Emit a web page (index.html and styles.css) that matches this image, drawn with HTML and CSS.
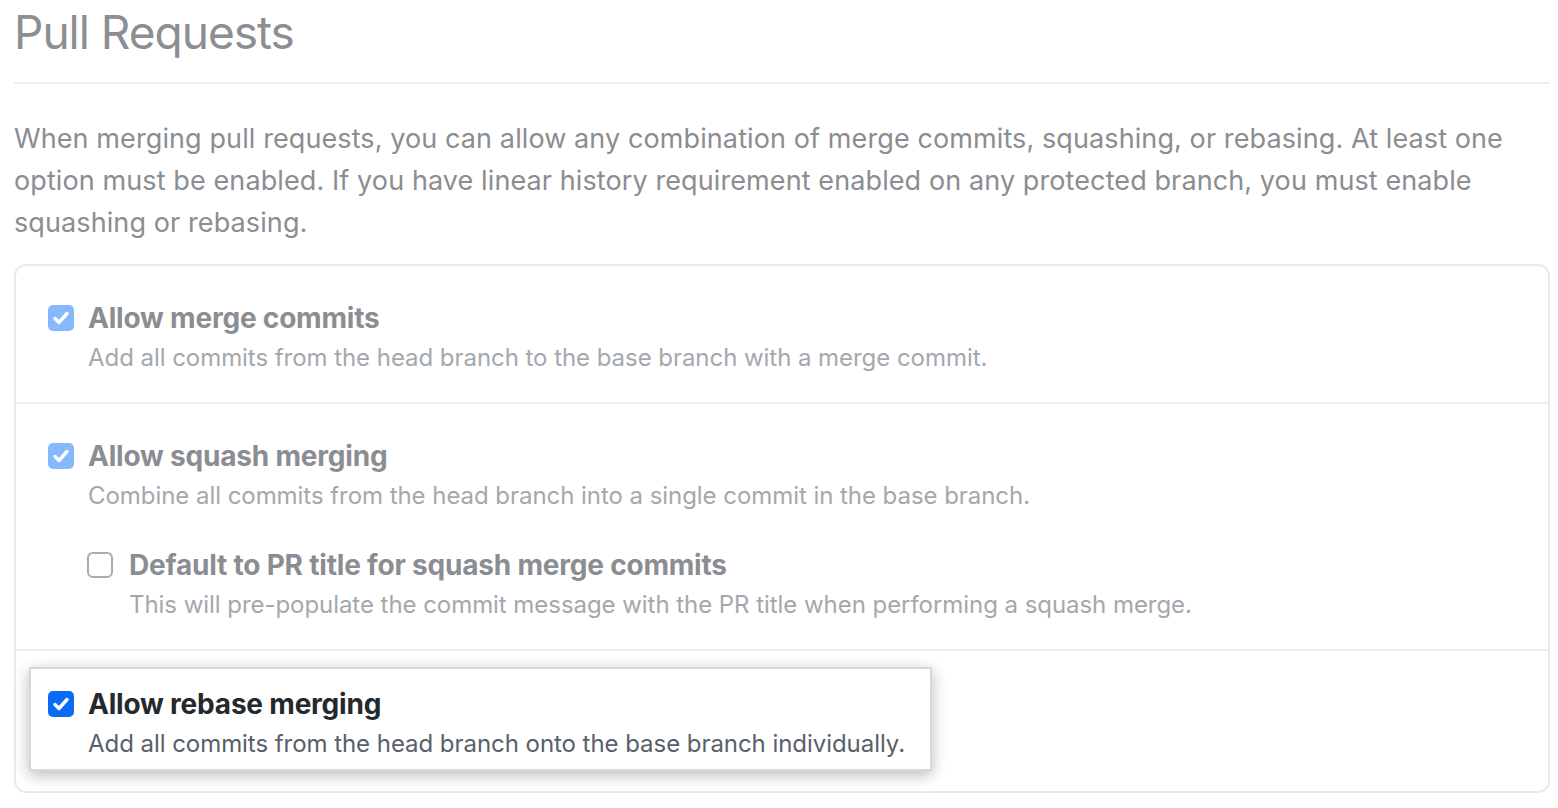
FILE: index.html
```html
<!DOCTYPE html>
<html>
<head>
<meta charset="utf-8">
<link rel="stylesheet" href="styles.css">
</head>
<body>
<div class="page">
  <h2 class="title">Pull Requests</h2>
  <p class="intro">When merging pull requests, you can allow any combination of merge commits, squashing, or rebasing. At least one option must be enabled. If you have linear history requirement enabled on any protected branch, you must enable squashing or rebasing.</p>
  <div class="box">
    <div class="row">
      <div class="option faded">
        <span class="cb checked"><svg viewBox="0 0 26 26"><path d="M7 13.5l4 4 8-9" fill="none" stroke="#fff" stroke-width="3.4" stroke-linecap="round" stroke-linejoin="round"/></svg></span>
        <div class="text">
          <div class="label">Allow merge commits</div>
          <div class="desc">Add all commits from the head branch to the base branch with a merge commit.</div>
        </div>
      </div>
    </div>
    <div class="row">
      <div class="option faded">
        <span class="cb checked"><svg viewBox="0 0 26 26"><path d="M7 13.5l4 4 8-9" fill="none" stroke="#fff" stroke-width="3.4" stroke-linecap="round" stroke-linejoin="round"/></svg></span>
        <div class="text">
          <div class="label">Allow squash merging</div>
          <div class="desc">Combine all commits from the head branch into a single commit in the base branch.</div>
          <div class="option sub">
            <span class="cb empty"></span>
            <div class="text">
              <div class="label">Default to PR title for squash merge commits</div>
              <div class="desc">This will pre-populate the commit message with the PR title when performing a squash merge.</div>
            </div>
          </div>
        </div>
      </div>
    </div>
    <div class="row last">
      <div class="spot">
        <div class="option active">
          <span class="cb checked"><svg viewBox="0 0 26 26"><path d="M7 13.5l4 4 8-9" fill="none" stroke="#fff" stroke-width="3.4" stroke-linecap="round" stroke-linejoin="round"/></svg></span>
          <div class="text">
            <div class="label">Allow rebase merging</div>
            <div class="desc">Add all commits from the head branch onto the base branch individually.</div>
          </div>
        </div>
      </div>
    </div>
  </div>
</div>
</body>
</html>
```

FILE: styles.css
```css
* { box-sizing: border-box; }
html, body { margin: 0; padding: 0; background: #fff; }
body {
  font-family: Inter, "Liberation Sans", Arial, sans-serif;
  color: #8a8d91;
}
.page { padding: 0 8px 0 14px; }
.title {
  margin: 0;
  padding-top: 2px;
  font-size: 46px;
  font-weight: 400;
  line-height: 60px;
  color: #8b8e92;
  letter-spacing: -1px;
  border-bottom: 2px solid #eceef1;
  padding-bottom: 20px;
}
.intro {
  margin: 34px 0 0;
  font-size: 27px;
  line-height: 42px;
  color: #8a8d91;
  letter-spacing: 0.1px;
}
.box {
  margin-top: 20px;
  border: 2px solid #e8eaed;
  border-radius: 12px;
  height: 529px;
}
.row {
  padding: 32px 32px 26px 32px;
  border-bottom: 2px solid #eceef1;
}
.row.last { border-bottom: 0; padding: 16px 0 0 13px; }
.option { display: flex; align-items: flex-start; gap: 14px; }
.cb {
  flex: none;
  width: 26px;
  height: 26px;
  margin-top: 7px;
  border-radius: 5px;
  display: block;
}
.cb svg { width: 26px; height: 26px; display: block; }
.faded .cb.checked { background: #85b9fb; }
.cb.empty { background: #fff; border: 2px solid #a9abae; border-radius: 6px; }
.active .cb.checked { background: #0b6bf4; }
.label {
  font-size: 28px;
  font-weight: 700;
  line-height: 40px;
  color: #8a8d91;
  letter-spacing: -0.2px;
}
.desc {
  margin-top: 2px;
  font-size: 24px;
  line-height: 36px;
  color: #a4a8ad;
  letter-spacing: -0.05px;
}
.option.sub { margin-top: 31px; margin-left: -1px; gap: 16px; }
.spot {
  display: inline-block;
  background: #fff;
  border: 2px solid #d8d8d8;
  box-shadow: 0 4px 14px rgba(0,0,0,0.28);
  padding: 15px 25px 7px 17px;
}
.active .label { color: #24292e; }
.active .desc { color: #586069; }
```
